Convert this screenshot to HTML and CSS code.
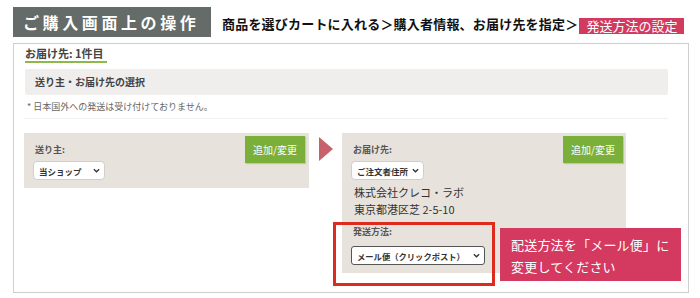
FILE: index.html
```html
<!DOCTYPE html>
<html lang="ja">
  <head>
    <meta charset="UTF-8" />
    <title>ご購入画面上の操作</title>
    <link rel="stylesheet" href="styles.css">
  </head>
  <body>
    <div class="header">
      <div class="title">ご購入画面上の操作</div>
      <div class="steps">商品を選びカートに入れる＞購入者情報、お届け先を指定＞</div>
      <div class="current">発送方法の設定</div>
    </div>

    <div class="frame">
      <div class="tab">お届け先: 1件目</div>
      <div class="bar">送り主・お届け先の選択</div>
      <p class="note">* 日本国外への発送は受け付けておりません。</p>

      <div class="boxes">
        <div class="box sender">
          <div class="label">送り主:</div>
          <div class="pick">
            <select>
              <option>当ショップ</option>
            </select>
            <svg class="chevron" viewBox="0 0 8 5"><path d="M1 1l3 3 3-3" /></svg>
          </div>
          <button class="edit-btn">追加/変更</button>
        </div>

        <div class="arrow"></div>

        <div class="box receiver">
          <div class="label">お届け先:</div>
          <div class="pick">
            <select>
              <option>ご注文者住所</option>
            </select>
            <svg class="chevron" viewBox="0 0 8 5"><path d="M1 1l3 3 3-3" /></svg>
          </div>
          <div class="address">株式会社クレコ・ラボ</div>
          <div class="address">東京都港区芝 2-5-10</div>
          <div class="label method-label">発送方法:</div>
          <div class="pick method">
            <select>
              <option>メール便（クリックポスト）</option>
            </select>
            <svg class="chevron" viewBox="0 0 8 5"><path d="M1 1l3 3 3-3" /></svg>
          </div>
          <button class="edit-btn">追加/変更</button>

          <!-- 注釈 -->
          <div class="highlight"></div>
          <div class="callout">配送方法を「メール便」に<br>変更してください</div>
        </div>
      </div>
    </div>
  </body>
</html>
```

FILE: styles.css
```css
body {
  margin: 0;
  padding: 7px 0 0 13px;
  font-family: "Noto Sans CJK JP", "Noto Sans", sans-serif;
  background: white;
  color: #333;
}

.header {
  display: flex;
  align-items: center;
  height: 30px;
}

.title {
  flex-shrink: 0;
  width: 198px;
  height: 30px;
  box-sizing: border-box;
  padding-left: 10px;
  background: #646b68;
  color: white;
  font-size: 16px;
  font-weight: bold;
  letter-spacing: 3.6px;
  line-height: 30px;
}

.steps {
  flex-shrink: 0;
  margin-left: 11px;
  font-size: 13px;
  font-weight: bold;
  color: #111;
  letter-spacing: 0.2px;
  white-space: nowrap;
  line-height: 16px;
  padding-top: 4px;
}

.current {
  flex-shrink: 0;
  margin-left: 1px;
  margin-top: 8px;
  padding: 0 7px;
  height: 16px;
  background: #d23a5f;
  color: white;
  font-size: 13px;
  line-height: 16px;
  white-space: nowrap;
}

.frame {
  margin-top: 6px;
  width: 676px;
  box-sizing: border-box;
  border: 1px solid #cfcfcf;
  padding: 2px 20px 19px 11px;
}

.tab {
  width: fit-content;
  font-size: 11px;
  font-weight: bold;
  color: #444;
  line-height: 15px;
  padding-right: 3px;
  border-bottom: 2px solid #8cb84c;
}

.bar {
  margin-top: 6px;
  height: 26px;
  background: #efeeec;
  border-radius: 2px;
  padding-left: 10px;
  font-size: 10px;
  font-weight: bold;
  color: #444;
  line-height: 26px;
}

.note {
  margin: 6px 0 0 2px;
  font-size: 9px;
  color: #666;
  line-height: 12px;
}

.boxes {
  display: flex;
  align-items: flex-start;
  margin-top: 5px;
  border-top: 1px solid #f1f1f1;
  padding-top: 14px;
  margin-left: -1px;
}

.box {
  position: relative;
  background: #e8e2dc;
  box-sizing: border-box;
  padding: 11px 0 8px 9px;
}

.sender {
  width: 285px;
}

.receiver {
  width: 284px;
}

.arrow {
  width: 0;
  height: 0;
  margin: 4px 9px 0 10px;
  border-top: 12px solid transparent;
  border-bottom: 12px solid transparent;
  border-left: 14px solid #c7626b;
}

.label {
  font-size: 9px;
  font-weight: bold;
  color: #555;
  line-height: 12px;
  padding-left: 2px;
}

/* セレクトボックス */
.pick {
  position: relative;
  width: 72px;
  height: 19px;
  margin-top: 5px;
}

.pick select {
  appearance: none;
  display: block;
  width: 100%;
  height: 19px;
  margin: 0;
  padding: 0 0 0 5px;
  font-family: inherit;
  font-size: 8.5px;
  font-weight: bold;
  color: #333;
  background: white;
  border: 1px solid #cfcfcf;
  border-radius: 4px;
}

.chevron {
  position: absolute;
  right: 5px;
  top: 7px;
  width: 7px;
  height: 5px;
  fill: none;
  stroke: #333;
  stroke-width: 1.5;
}

.receiver .pick {
  width: 73px;
}

.receiver .pick.method {
  width: 134px;
  margin-top: 8px;
}

.pick.method select {
  font-size: 8.3px;
  border-color: #555;
  border-radius: 3px;
}

.address {
  font-size: 11px;
  line-height: 17px;
  color: #333;
  padding-left: 3px;
}

.receiver .pick + .address {
  margin-top: 4px;
}

.method-label {
  margin-top: 8px;
}

.edit-btn {
  position: absolute;
  top: 3px;
  right: 4px;
  width: 60px;
  height: 27px;
  padding: 0;
  border: none;
  background: #7aaf39;
  color: white;
  font-family: inherit;
  font-size: 10px;
  box-shadow: 1px 1px 1px rgba(0, 0, 0, 0.15);
}

.receiver .edit-btn {
  right: 3px;
}

.highlight {
  position: absolute;
  left: -9px;
  top: 89px;
  width: 162px;
  height: 64px;
  box-sizing: border-box;
  border: 3px solid #dd2b1d;
}

.callout {
  position: absolute;
  left: 158px;
  top: 95px;
  width: 181px;
  height: 53px;
  box-sizing: border-box;
  padding: 6px 0 0 11px;
  background: #d4395f;
  color: white;
  font-size: 13px;
  line-height: 22px;
  letter-spacing: 0.2px;
}
```
